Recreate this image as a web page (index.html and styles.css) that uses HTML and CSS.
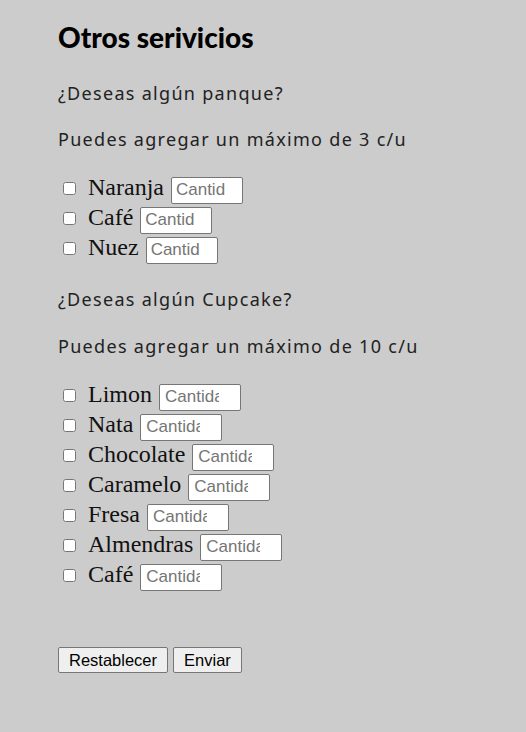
FILE: index.html
```html
<!DOCTYPE html>
<html lang="es">
<head>
<meta charset="utf-8">
<link rel="stylesheet" href="styles.css">
</head>
<body>
<form class="page">
  <h2 class="title">Otros serivicios</h2>
  <p class="text q1">¿Deseas algún panque?</p>
  <p class="text q2">Puedes agregar un máximo de 3 c/u</p>
  <div class="list">
    <div class="row"><input type="checkbox" class="chk"><span class="lbl">Naranja</span><input class="qty qty-s" placeholder="Cantidad"></div>
    <div class="row"><input type="checkbox" class="chk"><span class="lbl">Café</span><input class="qty qty-s" placeholder="Cantidad"></div>
    <div class="row"><input type="checkbox" class="chk"><span class="lbl">Nuez</span><input class="qty qty-s" placeholder="Cantidad"></div>
  </div>
  <p class="text q3">¿Deseas algún Cupcake?</p>
  <p class="text q4">Puedes agregar un máximo de 10 c/u</p>
  <div class="list">
    <div class="row"><input type="checkbox" class="chk"><span class="lbl">Limon</span><input class="qty qty-l" placeholder="Cantidad"></div>
    <div class="row"><input type="checkbox" class="chk"><span class="lbl">Nata</span><input class="qty qty-l" placeholder="Cantidad"></div>
    <div class="row"><input type="checkbox" class="chk"><span class="lbl">Chocolate</span><input class="qty qty-l" placeholder="Cantidad"></div>
    <div class="row"><input type="checkbox" class="chk"><span class="lbl">Caramelo</span><input class="qty qty-l" placeholder="Cantidad"></div>
    <div class="row"><input type="checkbox" class="chk"><span class="lbl">Fresa</span><input class="qty qty-l" placeholder="Cantidad"></div>
    <div class="row"><input type="checkbox" class="chk"><span class="lbl">Almendras</span><input class="qty qty-l" placeholder="Cantidad"></div>
    <div class="row"><input type="checkbox" class="chk"><span class="lbl">Café</span><input class="qty qty-l" placeholder="Cantidad"></div>
  </div>
  <div class="actions">
    <button type="reset" class="btn">Restablecer</button>
    <button type="button" class="btn">Enviar</button>
  </div>
</form>
</body>
</html>
```
FILE: styles.css
```css
html, body {
  margin: 0;
  padding: 0;
  background: #cccccc;
}
.page {
  display: flex;
  flex-direction: column;
  align-items: flex-start;
  padding: 17px 0 40px 58px;
}
.title {
  margin: 0;
  font-family: Lato, sans-serif;
  font-weight: 900;
  font-size: 28px;
  line-height: 40px;
  color: #000;
}
.text {
  margin: 0;
  font-family: "Noto Sans", sans-serif;
  font-size: 18px;
  line-height: 24px;
  letter-spacing: 1.3px;
  color: #222;
}
.q1 { margin-top: 24px; }
.q2 { margin-top: 22px; }
.q3 { margin-top: 24px; }
.q4 { margin-top: 23px; }
.list {
  display: flex;
  flex-direction: column;
  margin-top: 22px;
}
.row {
  display: flex;
  align-items: center;
  height: 30px;
}
.chk {
  width: 13px;
  height: 13px;
  margin: 0 12px 0 5px;
}
.lbl {
  font-family: "Liberation Serif", serif;
  font-size: 24px;
  color: #111;
  margin-right: 7px;
  position: relative;
  top: -1px;
}
.qty {
  box-sizing: border-box;
  height: 27px;
  margin-top: 4px;
  padding: 2px 17px 2px 4px;
  border: 1px solid #767676;
  border-radius: 2px;
  background: #fff;
  font-family: "Liberation Sans", sans-serif;
  font-size: 17px;
}
.qty::placeholder { color: #757575; }
.qty-s { width: 72px; }
.qty-l { width: 82px; padding-left: 5px; padding-right: 21px; }
.actions {
  display: flex;
  gap: 5px;
  margin-top: 57px;
}
.btn {
  box-sizing: border-box;
  height: 26px;
  padding: 1px 10px;
  border: 1px solid #767676;
  border-radius: 2px;
  background: #efefef;
  font-family: "Liberation Sans", sans-serif;
  font-size: 16.5px;
  color: #000;
}
```
